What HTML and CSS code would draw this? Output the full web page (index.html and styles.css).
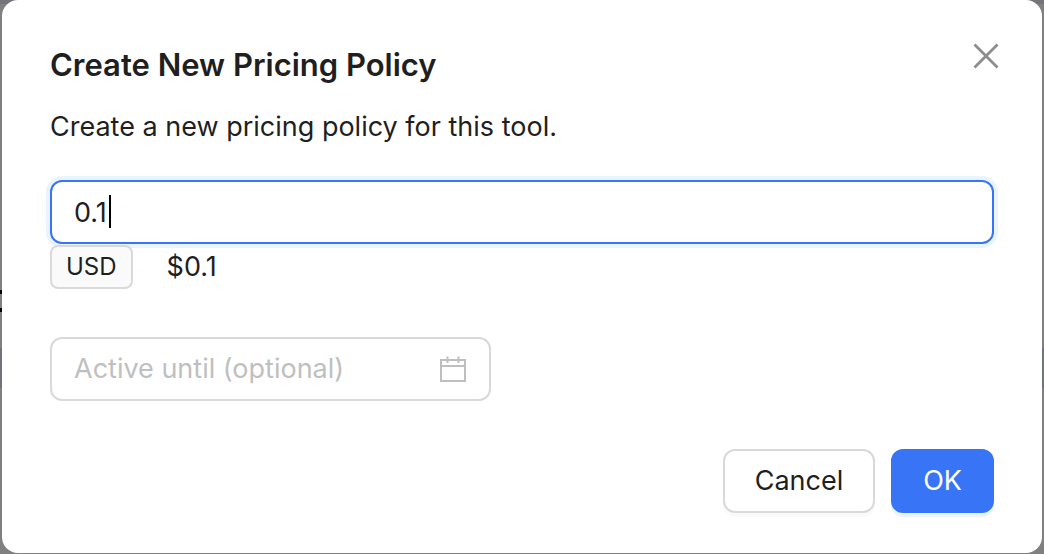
FILE: index.html
```html
<!DOCTYPE html>
<html lang="en">
<head>
    <meta charset="UTF-8">
    <meta name="viewport" content="width=device-width, initial-scale=1.0">
    <title>Create New Pricing Policy</title>
    <link rel="stylesheet" href="styles.css">
</head>
<body>
    <div class="page-behind" aria-hidden="true">
        <div class="page-header"></div>
        <div class="page-mark"></div>
        <div class="page-row"></div>
    </div>

    <form class="modal" role="dialog" aria-labelledby="modalTitle">
        <button class="close-btn" type="button" aria-label="Close">
            <svg viewBox="0 0 26 26" width="26" height="26">
                <path d="M1.5 1.5 L24.5 24.5 M24.5 1.5 L1.5 24.5"/>
            </svg>
        </button>

        <h1 class="modal-title" id="modalTitle">Create New Pricing Policy</h1>
        <p class="modal-text">Create a new pricing policy for this tool.</p>

        <div class="price-field">
            <input class="price-input" type="text" id="price" value="0.1" aria-label="Price">
            <span class="caret"></span>
        </div>
        <div class="price-preview">
            <span class="currency-tag">USD</span>
            <span class="price-value">$0.1</span>
        </div>

        <div class="date-picker">
            <input class="date-input" type="text" id="activeUntil" placeholder="Active until (optional)" aria-label="Active until">
            <svg class="calendar-icon" viewBox="0 0 26 26" width="26" height="26">
                <path d="M1 4 H25 V25 H1 Z M1 10 H25 M7.5 0.5 V7 M18.5 0.5 V7"/>
            </svg>
        </div>

        <div class="modal-footer">
            <button class="btn cancel-btn" type="button">Cancel</button>
            <button class="btn ok-btn" type="submit">OK</button>
        </div>
    </form>
</body>
</html>
```

FILE: styles.css
```css
* {
    box-sizing: border-box;
    margin: 0;
    padding: 0;
}

body {
    font-family: Inter, "Liberation Sans", sans-serif;
    font-size: 27px;
    line-height: 44px;
    color: #1f1f1f;
    background-color: #808080;
}

button,
input {
    font: inherit;
    color: inherit;
}

/* dimmed page under the dialog */
.page-behind {
    position: absolute;
    inset: 0;
    overflow: hidden;
}

.page-header {
    height: 4px;
    background: #74757b;
}

.page-mark {
    width: 4px;
    height: 22px;
    margin-top: 286px;
    border: solid #000;
    border-width: 4px 0;
}

.page-row {
    height: 40px;
    margin-top: 36px;
    background: #727279;
}

.modal {
    position: relative;
    margin: 0 2px;
    padding: 41px 48px 40px;
    background: #fff;
    border-radius: 16px;
}

.close-btn {
    position: absolute;
    top: 34px;
    right: 34px;
    display: flex;
    align-items: center;
    justify-content: center;
    width: 44px;
    height: 44px;
    border: none;
    background: none;
    cursor: pointer;
}

.close-btn svg,
.calendar-icon {
    fill: none;
    stroke: #8c8c8c;
    stroke-width: 2.8;
}

.modal-title {
    margin-bottom: 16px;
    font-size: 31px;
    font-weight: 600;
    line-height: 48px;
}

.modal-text {
    margin-bottom: 31px;
}

.price-field {
    position: relative;
}

.price-input {
    display: block;
    width: 100%;
    height: 64px;
    padding: 0 22px;
    border: 2px solid #3875f6;
    border-radius: 12px;
    outline: none;
    background: #fff;
    box-shadow: 0 0 0 4px #eaf4fe;
}

.caret {
    position: absolute;
    top: 15px;
    left: 59px;
    width: 2px;
    height: 33px;
    background: #000;
}

.price-preview {
    position: relative;
    display: flex;
    align-items: center;
    gap: 34px;
    margin: 1px 0 48px;
}

.currency-tag {
    padding: 0 14px;
    border: 2px solid #d9d9d9;
    border-radius: 8px;
    background: #fafafa;
    font-size: 24px;
    line-height: 40px;
}

.date-picker {
    display: flex;
    align-items: center;
    width: 441px;
    max-width: 100%;
    height: 64px;
    margin-bottom: 48px;
    padding: 0 23px 0 22px;
    border: 2px solid #d9d9d9;
    border-radius: 12px;
}

.date-input {
    flex: 1;
    min-width: 0;
    border: none;
    outline: none;
    background: none;
}

.date-input::placeholder {
    color: #bfbfbf;
}

.calendar-icon {
    stroke: #bfbfbf;
    stroke-width: 2;
}

.modal-footer {
    display: flex;
    justify-content: flex-end;
    gap: 16px;
}

.btn {
    height: 64px;
    padding: 0 30px;
    border: 2px solid #d9d9d9;
    border-radius: 12px;
    background: #fff;
    box-shadow: 0 4px 0 #fafafa;
    cursor: pointer;
}

.ok-btn {
    border-color: #3875f6;
    background: #3875f6;
    box-shadow: 0 4px 0 #eaf4fe;
    color: #fff;
}
```
